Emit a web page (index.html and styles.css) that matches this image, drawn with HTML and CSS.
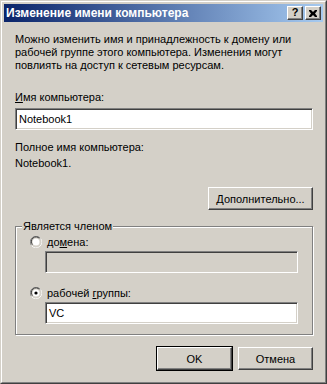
FILE: index.html
```html
<!DOCTYPE html>
<html>
  <head>
    <title>Изменение имени компьютера</title>
    <link rel="stylesheet" href="styles.css">
  </head>
  <body>
    <div class="window">
      <div class="frame">
        <div class="titlebar">
          <span class="title">Изменение имени компьютера</span>
          <div class="title-buttons">
            <span class="tbtn help">?</span>
            <span class="tbtn close">
              <svg width="8" height="7" viewBox="0 0 8 7">
                <path d="M0 0h2l2 2 2-2h2v1l-2 2.5 2 2.5v1h-2l-2-2-2 2h-2v-1l2-2.5-2-2.5z" fill="#000"/>
              </svg>
            </span>
          </div>
        </div>

        <div class="content">
          <p class="intro">
            Можно изменить имя и принадлежность к домену или
            рабочей группе этого компьютера. Изменения могут
            повлиять на доступ к сетевым ресурсам.
          </p>

          <label class="label name-label"><u>И</u>мя компьютера:</label>
          <div class="field">Notebook1</div>

          <div class="label full-label">Полное имя компьютера:</div>
          <div class="label full-value">Notebook1.</div>

          <div class="row more-row">
            <button class="btn more"><u>Д</u>ополнительно...</button>
          </div>

          <fieldset class="group">
            <legend>Является членом</legend>
            <div class="radio-row">
              <span class="radio">
                <svg width="12" height="12" viewBox="0 0 12 12">
                  <path d="M10.5 2.5A5.5 5.5 0 0 0 1.5 9.5" stroke="#808080" fill="none"/>
                  <path d="M9.5 2.5A4.5 4.5 0 0 0 2.5 8.5" stroke="#404040" fill="none"/>
                  <path d="M1.5 9.5A5.5 5.5 0 0 0 10.5 2.5" stroke="#fff" fill="none"/>
                  <path d="M2.5 9.5A4.5 4.5 0 0 0 9.5 2.5" stroke="#d4d0c8" fill="none"/>
                  <circle cx="6" cy="6" r="3.5" fill="#fff"/>
                </svg>
              </span>
              <span>до<u>м</u>ена:</span>
            </div>
            <div class="field disabled"></div>
            <div class="radio-row">
              <span class="radio">
                <svg width="12" height="12" viewBox="0 0 12 12">
                  <path d="M10.5 2.5A5.5 5.5 0 0 0 1.5 9.5" stroke="#808080" fill="none"/>
                  <path d="M9.5 2.5A4.5 4.5 0 0 0 2.5 8.5" stroke="#404040" fill="none"/>
                  <path d="M1.5 9.5A5.5 5.5 0 0 0 10.5 2.5" stroke="#fff" fill="none"/>
                  <path d="M2.5 9.5A4.5 4.5 0 0 0 9.5 2.5" stroke="#d4d0c8" fill="none"/>
                  <circle cx="6" cy="6" r="3.5" fill="#fff"/>
                  <circle cx="6" cy="6" r="1.6" fill="#000"/>
                </svg>
              </span>
              <span>рабочей <u>г</u>руппы:</span>
            </div>
            <div class="field">VC</div>
          </fieldset>

          <div class="row actions">
            <button class="btn default">OK</button>
            <button class="btn">Отмена</button>
          </div>
        </div>
      </div>
    </div>
  </body>
</html>
```

FILE: styles.css
```css
body {
  margin: 0;
  font-family: "Liberation Sans", Arial, sans-serif;
  font-size: 11px;
  color: #000;
  background: #d4d0c8;
}
.window {
  width: 327px;
  height: 384px;
  box-sizing: border-box;
  border: 1px solid;
  border-color: #d4d0c8 #404040 #404040 #d4d0c8;
  background: #d4d0c8;
}
.frame {
  height: 100%;
  box-sizing: border-box;
  border: 1px solid;
  border-color: #fff #808080 #808080 #fff;
  padding: 2px;
}
.titlebar {
  height: 18px;
  display: flex;
  align-items: center;
  justify-content: space-between;
  background: linear-gradient(to right, #0a246a, #a6caf0);
  padding: 0 2px 0 2px;
}
.title {
  color: #fff;
  font-weight: bold;
  font-size: 12px;
}
.title-buttons {
  display: flex;
  gap: 2px;
}
.tbtn {
  width: 16px;
  height: 14px;
  box-sizing: border-box;
  display: flex;
  align-items: center;
  justify-content: center;
  background: #d4d0c8;
  border: 1px solid;
  border-color: #fff #404040 #404040 #fff;
  box-shadow: inset -1px -1px 0 #808080;
}
.help {
  font-weight: bold;
  font-size: 11px;
  line-height: 1;
  padding-bottom: 1px;
}
.content {
  padding: 11px 10px 0 11px;
}
.intro {
  margin: 0;
  line-height: 13px;
  width: 290px;
}
.label {
  display: block;
  line-height: 13px;
}
.name-label {
  margin-top: 19px;
}
.field {
  height: 22px;
  box-sizing: border-box;
  margin-top: 4px;
  background: #fff;
  border: 1px solid;
  border-color: #808080 #fff #fff #808080;
  box-shadow: inset 1px 1px 0 #404040, inset -1px -1px 0 #d4d0c8;
  padding: 4px 3px;
  line-height: 13px;
}
.field.disabled {
  background: #d4d0c8;
}
.full-label {
  margin-top: 11px;
}
.full-value {
  margin-top: 3px;
}
.row {
  display: flex;
  justify-content: flex-end;
  gap: 6px;
}
.more-row {
  margin-top: 17px;
}
.btn {
  height: 23px;
  width: 75px;
  font-family: inherit;
  font-size: 11px;
  color: #000;
  background: #d4d0c8;
  border: 1px solid;
  border-color: #fff #404040 #404040 #fff;
  box-shadow: inset -1px -1px 0 #808080;
  padding: 0;
}
.btn.more {
  width: 105px;
}
.btn.default {
  outline: 1px solid #000;
}
.group {
  margin: 10px 0 0;
  padding: 2px 14px 10px 14px;
  border: 1px solid #808080;
  box-shadow: inset 1px 1px 0 #fff, 1px 1px 0 #fff;
}
.group legend {
  padding: 0 1px;
  margin-left: -8px;
  background: #d4d0c8;
  line-height: 13px;
}
.radio-row {
  display: flex;
  align-items: center;
  gap: 5px;
  height: 13px;
}
.radio {
  display: flex;
}
.group .field {
  margin: 3px 0 13px 15px;
}
.group .field:last-child {
  margin-bottom: 0;
}
.actions {
  margin-top: 12px;
}
```
